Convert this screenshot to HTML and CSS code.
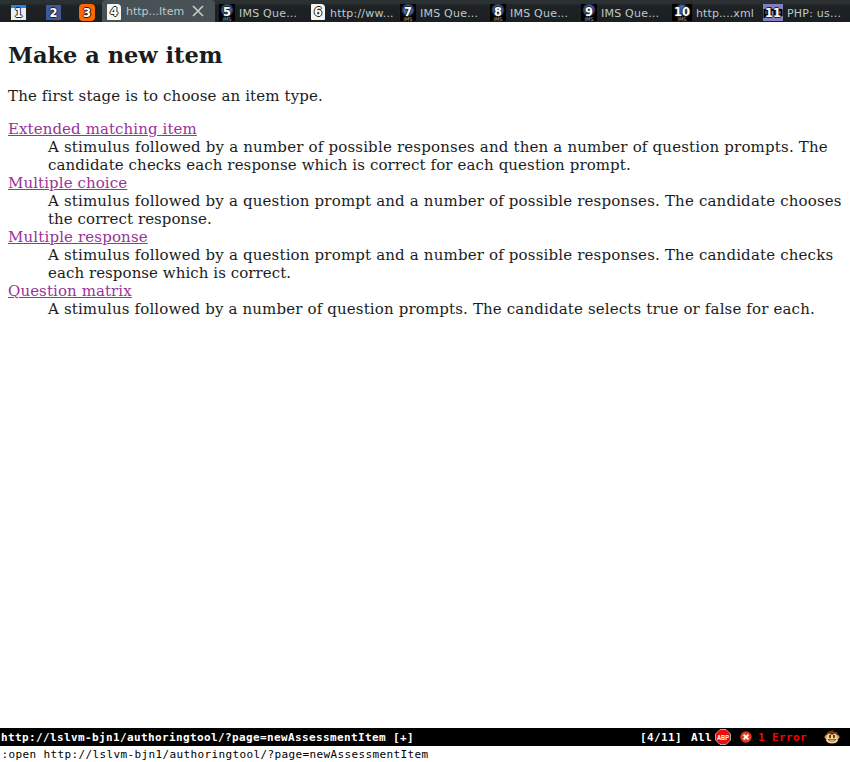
FILE: index.html
```html
<!DOCTYPE html>
<html lang="en">
<head>
<meta charset="utf-8">
<title>Make a new item</title>
<link rel="stylesheet" href="styles.css">
</head>
<body>
<nav class="tabs">
  <div class="tab pinned"><span class="icon window"><b>1</b></span></div>
  <div class="tab pinned"><span class="icon blue"><b>2</b></span></div>
  <div class="tab pinned"><span class="icon orange"><b>3</b></span></div>
  <div class="tab active"><span class="icon paper"><b>4</b></span><span class="label">http...Item</span>
    <svg class="close" width="12" height="12" viewBox="0 0 12 12"><path d="M1 1l10 10M11 1L1 11" stroke="#c9c9bd" stroke-width="1.7"/></svg></div>
  <div class="tab"><span class="icon ims"><b>5</b><i>IMS</i></span><span class="label">IMS Que...</span></div>
  <div class="tab"><span class="icon paper"><b>6</b></span><span class="label">http://ww...</span></div>
  <div class="tab"><span class="icon ims"><b>7</b><i>IMS</i></span><span class="label">IMS Que...</span></div>
  <div class="tab"><span class="icon ims"><b>8</b><i>IMS</i></span><span class="label">IMS Que...</span></div>
  <div class="tab"><span class="icon ims"><b>9</b><i>IMS</i></span><span class="label">IMS Que...</span></div>
  <div class="tab"><span class="icon ims wide"><b>10</b><i>IMS</i></span><span class="label plain">http....xml</span></div>
  <div class="tab"><span class="icon php wide"><svg width="20" height="16" viewBox="0 0 20 16"><path d="M1.500 14V6h3v5h-3M7.500 3v8M7.500 6h4v5M15 14V6h3.500v5H15" fill="none" stroke="#000" stroke-width="2"/></svg><b>11</b></span><span class="label">PHP: us...</span></div>
</nav>
<main class="page">
  <h2>Make a new item</h2>
  <p>The first stage is to choose an item type.</p>
  <dl>
    <dt><a href="#">Extended matching item</a></dt>
    <dd><span class="loose">A stimulus followed by a number of possible responses and then a number of question prompts. The</span><br><span class="snug">candidate checks each response which is correct for each question prompt.</span></dd>
    <dt><a href="#">Multiple choice</a></dt>
    <dd><span class="medium">A stimulus followed by a question prompt and a number of possible responses. The candidate chooses</span><br><span class="tight">the correct response.</span></dd>
    <dt><a class="wider" href="#">Multiple response</a></dt>
    <dd><span class="medium">A stimulus followed by a question prompt and a number of possible responses. The candidate checks</span><br><span class="tight">each response which is correct.</span></dd>
    <dt><a href="#">Question matrix</a></dt>
    <dd><span class="wider">A stimulus followed by a number of question prompts. The candidate selects true or false for each.</span></dd>
  </dl>
</main>
<footer>
  <div class="status">
    <span class="url">http://lslvm-bjn1/authoringtool/?page=newAssessmentItem [+]</span>
    <span class="count">[4/11]</span><span class="all">All</span>
    <svg class="abp" width="16" height="16" viewBox="0 0 16 16"><path d="M5 .5h6L15.500 5v6L11 15.500H5L.5 11V5z" fill="#f00c0c" stroke="#a9a9a9"/><text x="2" y="11" textLength="12" lengthAdjust="spacingAndGlyphs">ABP</text></svg>
    <svg class="err" width="12" height="12" viewBox="0 0 12 12"><circle cx="6" cy="6" r="5.7" fill="#e23a1e"/><path d="M3.600 3.600l4.800 4.800M8.400 3.600L3.600 8.400" stroke="#fff" stroke-width="2"/></svg>
    <span class="errors">1 Error</span>
    <svg class="monkey" width="16" height="16" viewBox="0 0 16 16"><path d="M2 7Q2 3 6 2L10 1 9 2.500 13 3Q14 5 14 7Z" fill="#6b3d12"/><circle cx="2.500" cy="8" r="2" fill="#d99a4e"/><circle cx="13.500" cy="8" r="2" fill="#d99a4e"/><path d="M3 7Q3 4 6 5L8 6 11 4.500Q13 5 13 8L14 11Q13 14.500 8 14.500T2 11Z" fill="#f7d190"/><path d="M6 6v3M10 6v3" stroke="#32230c" stroke-width="1.600"/><path d="M4 10.500Q8 14 12 10.500Z" fill="#fff" stroke="#75441b" stroke-width=".8"/></svg>
  </div>
  <div class="command">:open http://lslvm-bjn1/authoringtool/?page=newAssessmentItem</div>
</footer>
</body>
</html>
```
FILE: styles.css
```css
* { box-sizing: border-box; }
body {
  margin: 0;
  height: 762px;
  display: flex;
  flex-direction: column;
  background: #fff;
  color: #1a1c1d;
  overflow: hidden;
}
.tabs {
  height: 22px;
  flex: none;
  display: grid;
  grid-template-columns: 36px 34px 32px 113px 90px 91px 90px 91px 91px 90px 92px;
  background: linear-gradient(#2b3032 0 3px, #1e2224 6px, #1b1f21);
  font: 11px/16px "DejaVu Sans", sans-serif;
  color: #bdc9cd;
}
.tab { display: flex; align-items: flex-start; padding: 4px 0 0 4px; white-space: nowrap; }
.tab.pinned { padding-left: 9px; }
.tab.active { padding-left: 5px; background: #485256; border-radius: 4px 4px 0 0; }
.active .label { margin-top: 0; letter-spacing: 0; }
.active .close { margin: 1px 0 0 8px; }
.label { margin: 2px 0 0 4px; letter-spacing: .22px; }
.label.plain { letter-spacing: .1px; }
.icon {
  position: relative;
  width: 16px;
  height: 17px;
  flex: none;
  text-align: center;
}
.icon.wide { width: 20px; }
.icon b {
  position: relative;
  z-index: 1;
  display: block;
  color: #fff;
  font-size: 11.5px;
  line-height: 18px;
  text-shadow: 1px 0 #222, -1px 0 #222, 0 1px #222, 0 -1px #222;
}
.icon i {
  position: absolute;
  left: 0;
  right: 0;
  bottom: 0;
  color: #aaa;
  font: 5px/4px "DejaVu Sans", sans-serif;
}
.ims { background: radial-gradient(circle at 50% 35%, #4270bb 0 4px, #000 7px); }
.icon.ims b { line-height: 16px; }
.window { width: 15px; height: 15px; margin: 1px 0 0 2px; background: linear-gradient(#168ae4 0 3px, #e9eef0 3px); }
.blue { width: 15px; height: 15px; margin: 1px 0 0 1px; background: #3e5a9c; }
.window b, .blue b { line-height: 16px; }
.orange { background: #ff6500; border-radius: 4px; }
.paper { width: 14px; margin: 0 1px 0 1px; height: 16px; background: #f6f6f1; border-radius: 1px 4px 1px 1px; }
.active .paper { margin-left: 0; }
.icon.paper b { line-height: 16px; }
.tab:nth-child(6) .paper { margin-left: 2px; }
.php { background: #8080c0; }
.php svg { position: absolute; left: 0; top: 0; }
.tab:last-child { padding-left: 5px; }
.page {
  flex: 1;
  padding: 0 8px;
  font: 15px/18px "DejaVu Serif", serif;
}
h2 { margin: 20px 0 18px; font-size: 22.5px; line-height: 27px; }
p { margin: 0 0 15px; letter-spacing: .125px; }
dl { margin: 0; white-space: nowrap; }
dd { margin: 0 0 0 40px; }
a { color: #993399; text-decoration: underline; letter-spacing: .09px; }
.loose { letter-spacing: .18px; }
.medium { letter-spacing: .167px; }
.wider { letter-spacing: .147px; }
.snug { letter-spacing: .1px; }
.tight { letter-spacing: .06px; }
footer { flex: none; height: 34px; font: 11px/18px "DejaVu Sans Mono", monospace; letter-spacing: .378px; }
.status {
  height: 18px;
  display: flex;
  align-items: center;
  padding-left: 1px;
  background: #000;
  color: #fff;
  font-weight: bold;
}
.status span { padding-top: 1px; }
.url { width: 639px; }
.count { width: 51px; }
.all { width: 24px; }
.abp text { fill: #fff; font: bold 7px "Liberation Sans", sans-serif; letter-spacing: 0; }
.err { margin-left: 9px; }
.errors { width: 66px; margin-left: 6px; color: #f00; }
.monkey { margin-left: 0; }
.command { padding-left: 1.5px; line-height: 18px; color: #000; }
```
